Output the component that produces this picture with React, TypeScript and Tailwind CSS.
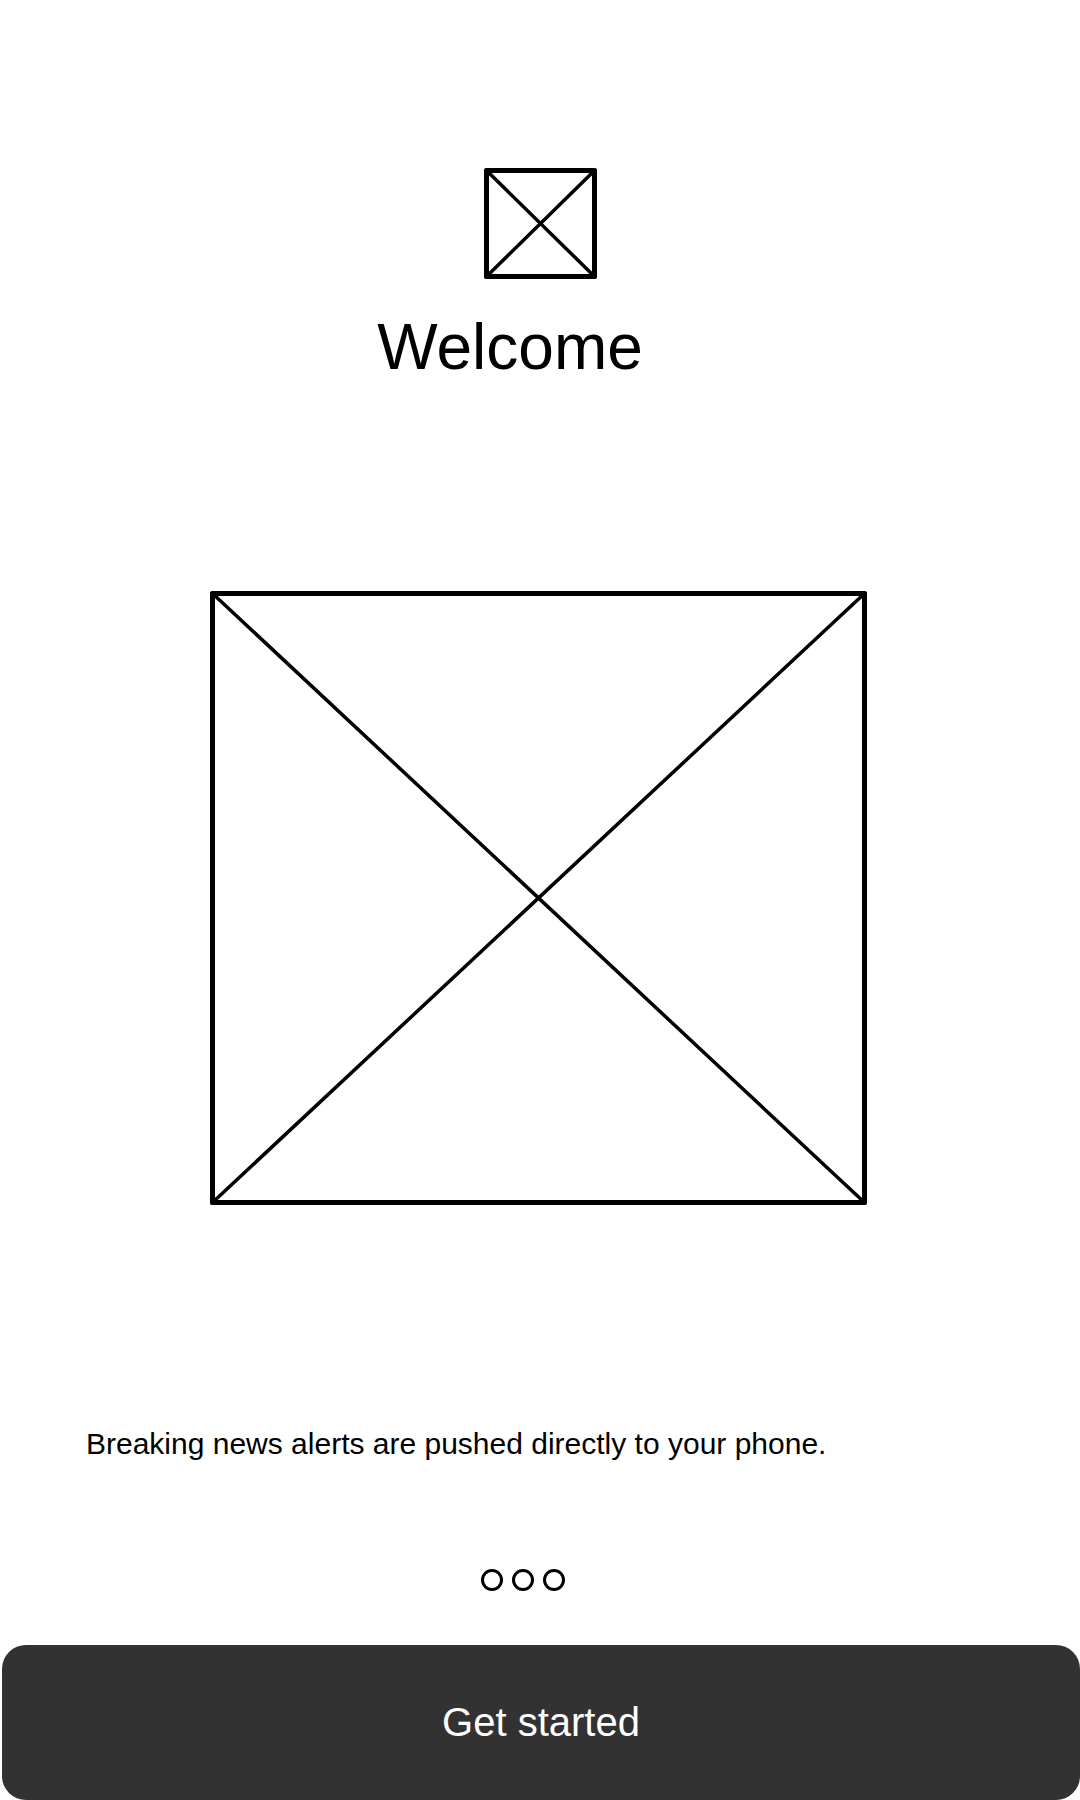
type PlaceholderProps = { width: number; height: number; label: string; className: string };

function Placeholder({ width, height, label, className }: PlaceholderProps) {
  const right = width - 2;
  const bottom = height - 2;
  return (
    <svg
      role="img"
      aria-label={label}
      viewBox={`0 0 ${width} ${height}`}
      className={className}
      fill="none"
      stroke="#000"
    >
      <rect
        x="2.5"
        y="2.5"
        width={width - 5}
        height={height - 5}
        strokeWidth="5"
        strokeLinejoin="round"
      />
      <path
        d={`M2 2 L${right} ${bottom} M${right} 2 L2 ${bottom}`}
        strokeWidth="3.5"
        strokeLinecap="round"
      />
    </svg>
  );
}

const pages = ["Page 1", "Page 2", "Page 3"];

export default function App() {
  return (
    <main className="flex min-h-screen flex-col bg-white pt-[168px] font-['Liberation_Sans',Arial,sans-serif] text-black">
      <header className="flex flex-col items-center">
        <Placeholder width={113} height={111} label="Logo" className="w-[113px]" />
        <h1 className="mt-9 pr-[60px] text-[64px] leading-[64px]">Welcome</h1>
      </header>

      <div className="mt-[212px] flex justify-center pr-[3px]">
        <Placeholder width={657} height={614} label="Illustration" className="w-[657px] max-w-full" />
      </div>

      <p className="mt-[221px] px-[86px] text-[30px] leading-9">
        Breaking news alerts are pushed directly to your phone.
      </p>

      <nav aria-label="Pages" className="mt-[107px] flex justify-center gap-[9px] pr-[34px]">
        {pages.map((page) => (
          <button
            key={page}
            type="button"
            aria-label={page}
            className="size-[22px] rounded-full border-3 border-black"
          />
        ))}
      </nav>

      <div className="mt-auto pl-0.5">
        <button
          type="button"
          className="w-full rounded-3xl bg-[#323232] pt-[53px] pb-[54px] text-[40px] leading-[48px] text-white"
        >
          Get started
        </button>
      </div>
    </main>
  );
}
